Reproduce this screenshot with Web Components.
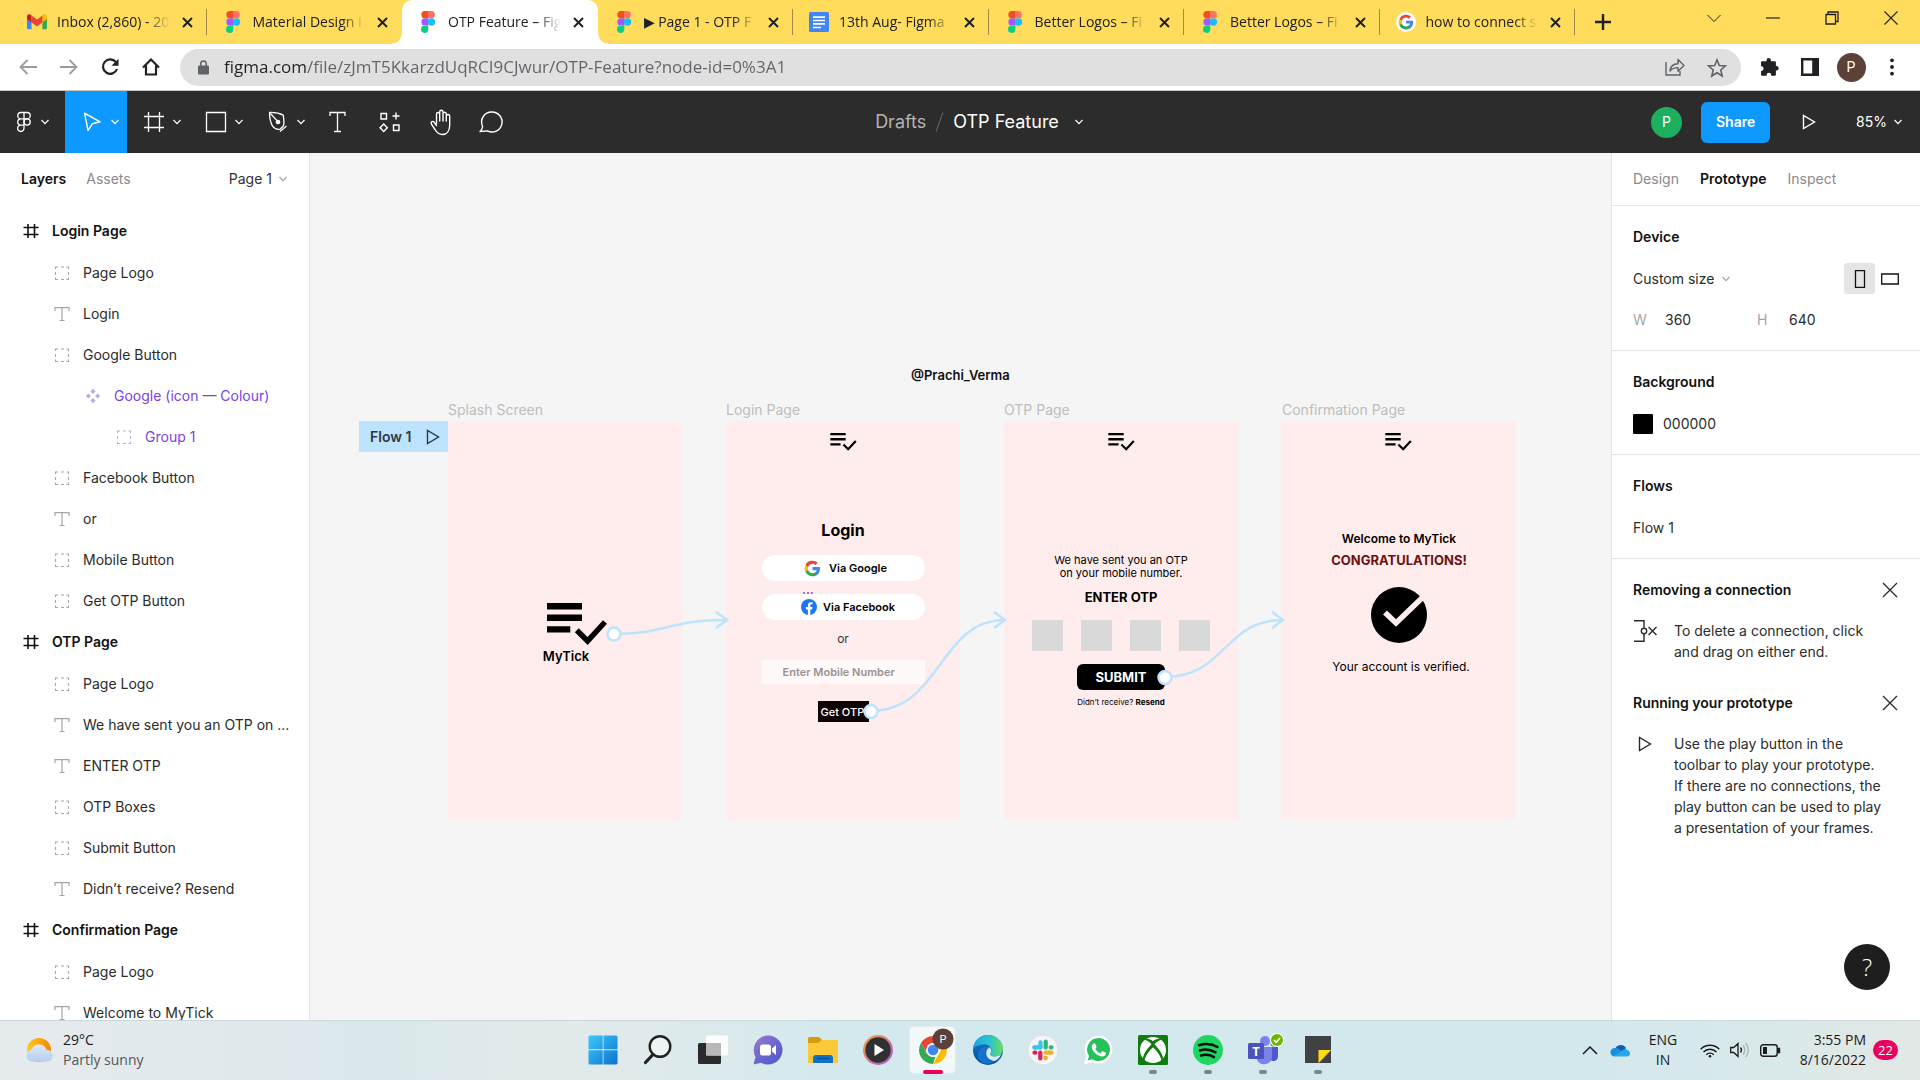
<!DOCTYPE html>
<html lang="en">
<head>
<meta charset="utf-8">
<title>OTP Feature – Figma</title>
<style>
html,body{margin:0;height:100%}
body{font-family:Inter,"Liberation Sans",sans-serif;font-size:14px;line-height:20px;color:#2b2b2b;overflow:hidden}
</style>
</head>
<body>
<desktop-app></desktop-app>
<script>
const FIGMA_LOGO = `<svg viewBox="0 0 20 24" width="20" height="24"><path d="M7 1h3.500v7.300H7A3.650 3.650 0 0 1 7 1z" fill="#f24e1e"/><path d="M10 1h3.200a3.650 3.650 0 0 1 0 7.300H10z" fill="#ff7262"/><path d="M7 8.300h3.500v7.300H7a3.650 3.650 0 0 1 0-7.300z" fill="#a259ff"/><circle cx="13.500" cy="12" r="3.650" fill="#1abcfe"/><path d="M7 15.700h3.300v3.600A3.650 3.650 0 1 1 7 15.700z" fill="#0acf83"/></svg>`;
const G_PATHS = `<path fill="#4285f4" d="M22.500 12.200c0-.8-.1-1.500-.2-2.200H12v4.300h5.900c-.3 1.400-1 2.500-2.200 3.300v2.800h3.600c2.100-1.900 3.200-4.700 3.200-8.200z"/><path fill="#34a853" d="M12 23c3 0 5.500-1 7.300-2.600l-3.600-2.800c-1 .7-2.200 1.100-3.700 1.100-2.900 0-5.300-1.900-6.200-4.500H2.200V17c1.800 3.600 5.500 6 9.800 6z"/><path fill="#fbbc05" d="M5.800 14.100a6.600 6.600 0 0 1 0-4.200V7H2.200a11 11 0 0 0 0 9.900z"/><path fill="#ea4335" d="M12 5.400c1.600 0 3.100.6 4.200 1.600l3.200-3.100A11 11 0 0 0 2.200 7l3.700 2.900C6.700 7.300 9.100 5.400 12 5.400z"/>`;
const line = (w, h, body, sw = 1) => `<svg viewBox="0 0 ${w} ${h}" width="${w}" height="${h}" fill="none" stroke="currentColor" stroke-width="${sw}">${body}</svg>`;
const app = (body, w = 32) => `<svg viewBox="0 0 ${w} 32" width="${w}" height="32">${body}</svg>`;

const ICONS = {
  figma: FIGMA_LOGO,
  gmail: `<svg viewBox="0 0 20 16" width="20" height="16"><path fill="#4285f4" d="M0 2v12a1.300 1.300 0 0 0 1.300 1.300H4.600V7z"/><path fill="#34a853" d="M20 2v12a1.300 1.300 0 0 1-1.300 1.300H15.400V7z"/><path fill="#c5221f" d="M0 2.200C0 .3 2.100-.4 3.500.6l1.100.9V8.500L0 5z"/><path fill="#fbbc04" d="M20 2.200C20 .3 17.900-.4 16.500.6l-1.100.9V8.500L20 5z"/><path fill="#ea4335" d="M4.600 1.500 10 5.600l5.400-4.100v7L10 12.500l-5.400-4z"/></svg>`,
  docs: `<svg viewBox="0 0 20 20" width="20" height="20"><rect width="20" height="20" rx="1.500" fill="#4285f4"/><path d="M4 5.200h12M4 8.500h12M4 11.800h12M4 15.500h8" stroke="#fff" stroke-width="1.700"/></svg>`,
  google: `<svg viewBox="0 0 20 20" width="20" height="20"><circle cx="10" cy="10" r="10" fill="#fff"/><g transform="translate(2 2) scale(.67)">${G_PATHS}</g></svg>`,
  g: `<svg viewBox="0 0 24 24" width="17" height="17">${G_PATHS}</svg>`,
  facebook: `<svg viewBox="0 0 16 16" width="16" height="16"><circle cx="8" cy="8" r="8" fill="#1877f2"/><path fill="#fff" d="M6.900 16V10.400H4.900V8h2V6.300c0-2 1.200-3.100 3-3.100.9 0 1.700.1 1.700.1v2h-1c-1 0-1.300.6-1.300 1.200V8h2.200l-.4 2.400H9.300V16z"/></svg>`,
  tabx: line(11, 11, `<path d="M1 1l9 9M10 1l-9 9"/>`, 2),
  plus: line(16, 16, `<path d="M8 0v16M0 8h16"/>`, 2.4),
  caret: line(14, 14, `<path d="M.5 4 7 10.500 13.500 4"/>`, 1),
  min: line(14, 14, `<path d="M0 7h14"/>`, 1.2),
  max: line(14, 14, `<path d="M1 3.500h9.500v9.500H1zM3 3.500V1h10v9.500h-2.500"/>`, 1.3),
  close: line(14, 14, `<path d="M.5.5l13 13M13.500.5l-13 13"/>`, 1.1),
  back: line(18, 16, `<path d="M18 8H1.500M8.500 1l-7 7 7 7"/>`, 1.8),
  forward: line(18, 16, `<path d="M0 8h16.500M9.500 1l7 7-7 7"/>`, 1.8),
  reload: line(18, 18, `<path d="M14.900 4.200A7.200 7.200 0 1 0 16 11"/><path d="M17.500.8v7h-7z" fill="currentColor" stroke="none"/>`, 2.2),
  home: line(18, 18, `<path d="M1 9.500 9 1.500l8 8M4 7.500v9h10v-9"/>`, 2.2),
  lock: `<svg viewBox="0 0 11 15" width="11" height="15"><path d="M2.800 6V3.700a2.700 2.700 0 0 1 5.400 0V6" fill="none" stroke="#5f6368" stroke-width="1.500"/><rect y="5.500" width="11" height="9" rx="1" fill="#5f6368"/></svg>`,
  share: line(20, 18, `<path d="M1 4v13h14v-4"/><path d="M5 13c.5-4.500 3-7 8-7.200V1.500l6 6-6 5.700V9.600c-3.500 0-6 .9-8 3.400z" stroke-linejoin="round"/>`, 1.4),
  star: line(20, 19, `<path d="M10 1.800l2.300 5.700 6.100.5-4.600 4 1.400 6-5.200-3.200L4.800 18l1.400-6-4.600-4 6.100-.5z"/>`, 1.6),
  puzzle: `<svg viewBox="0 0 20 20" width="20" height="20"><path fill="#202124" d="M7.500 3.300a2.200 2.200 0 0 1 4.400 0v.9h3.800a1.200 1.200 0 0 1 1.200 1.200v3.700h.5a2.200 2.200 0 0 1 0 4.500h-.5v3.900a1.200 1.200 0 0 1-1.200 1.200h-3.500v-.6a2.300 2.300 0 0 0-4.600 0v.6H3.200A1.200 1.200 0 0 1 2 17.500v-3.600h.7a2.400 2.400 0 0 0 0-4.700H2V5.400a1.200 1.200 0 0 1 1.200-1.200h4.300z"/></svg>`,
  side: `<svg viewBox="0 0 18 18" width="18" height="18"><path fill="#202124" fill-rule="evenodd" d="M0 0h18v18H0zM2.400 2.400v13.200h8.800V2.400z"/></svg>`,
  dots: `<svg viewBox="0 0 4 18" width="4" height="18" fill="#202124"><circle cx="2" cy="2.300" r="1.900"/><circle cx="2" cy="9" r="1.900"/><circle cx="2" cy="15.700" r="1.900"/></svg>`,
  chev: line(8, 6, `<path d="M.5 1 4 4.600 7.500 1"/>`, 1.2),
  fmenu: line(24, 24, `<path d="M12 2.500H8.900a3.100 3.100 0 0 0 0 6.300H12zM12 2.500h3.100a3.100 3.100 0 0 1 0 6.300H12zM12 8.800H8.900a3.100 3.100 0 0 0 0 6.300H12zM12 15.100H8.900A3.200 3.200 0 1 0 12 18.300z"/><circle cx="15.100" cy="12" r="3.100"/>`, 1.3),
  move: line(24, 24, `<path d="M4.500 3.200 20 11.800l-7.600 1.900-4.300 6.800z" stroke-linejoin="round"/>`, 1.4),
  frame: line(24, 24, `<path d="M6.500 2v20M17.500 2v20M2 6.500h20M2 17.500h20"/>`, 1.3),
  rect: line(24, 24, `<path d="M2.500 2.500h19v19h-19z"/>`, 1.3),
  pen: line(24, 24, `<path d="M3.500 2.500c5-.2 10.300.8 13.700 2.600.8 4.400 1.100 7.700.3 10.600l-3.500 3.500c-3 .7-5.500-.5-7.400-3C4.500 12.500 3.500 7.500 3.500 2.500zM3.500 2.500l8.200 8.900M14 21.500l6.500-5.500" stroke-linejoin="round"/><circle cx="12" cy="12" r="1.700" fill="currentColor"/>`, 1.3),
  text: line(24, 24, `<path d="M3 6V2.500h15V6M10.500 2.500v19M7 21.500h7"/>`, 1.3),
  comps: line(24, 24, `<path d="M3 3.500h5.500V9H3zM18 2.500v7M14.500 6h7M15.500 15H21v5.500h-5.500zM5.700 14l3.600 3.700-3.600 3.700-3.600-3.700z"/>`, 1.4),
  hand: line(26, 28, `<path d="M7.500 15.500V6.200c0-2.200 3.200-2.200 3.200 0V13M10.700 7V4c0-2.300 3.300-2.300 3.300 0v9M14 6c0-2.400 3.300-2.400 3.300 0v7M17.300 8.200c0-2.300 3.400-2.300 3.400 0V17c0 6-3 9.500-7.300 9.500-3.900 0-5.700-2-7.400-5L2.300 15.800c-.9-2 1.400-3.300 2.800-1.600l2.400 3.300" stroke-linecap="round" stroke-linejoin="round" transform="translate(1 0)"/>`, 1.4),
  comment: line(26, 24, `<path d="M13 2a10 10 0 1 1-4.500 18.900L1 21.500c2-1.800 2.600-3.400 2.600-5.200A10 10 0 0 1 13 2z" stroke-linejoin="round"/>`, 1.4),
  play: line(14, 16, `<path d="M1.500 1.500v13L12.500 8z"/>`, 1.4),
  lframe: line(16, 16, `<path d="M5 1v14M11.500 1v14M.5 4.500h15M.5 11.500h15"/>`, 1.6),
  lgroup: line(16, 16, `<path d="M1.500 4V2H4M7 2h3M12.500 2h2v2M14.500 7v3M14.500 12.500v2h-2M10 14.500H7M4 14.500H1.500v-2M1.500 10V7"/>`, 1.1),
  ltext: line(16, 16, `<path d="M1 5V1.700h14V5M8 1.700v12.800M5.500 14.500h5"/>`, 1.2),
  lcomp: `<svg viewBox="0 0 16 16" width="16" height="16" fill="#c0a8e0"><path d="M8 .8 10.600 3.400 8 6 5.400 3.400zM8 10l2.600 2.600L8 15.200l-2.600-2.600zM3.400 5.400 6 8l-2.600 2.600L.8 8zM12.600 5.400 15.200 8l-2.600 2.600L10 8z"/></svg>`,
  portrait: line(18, 18, `<path d="M4.500.7h9v16.600h-9z"/>`, 1.3),
  landscape: line(18, 18, `<path d="M.7 4h16.600v10H.7z"/>`, 1.3),
  x: line(14, 14, `<path d="M0 0l14 14M14 0 0 14"/>`, 1.3),
  unlink: line(24, 22, `<path d="M1 .8h10v7M11 14v7.200H1M15.500 7l8 8M23.500 7l-8 8"/><circle cx="11" cy="11" r="2.700"/>`, 1.4),
  logo: `<svg viewBox="0 0 60 41" width="60" height="41"><path d="M0 0h35v6.400H0zM0 11.600h35V18H0zM0 23.200h23.300v6.400H0z"/><path d="M29.800 27.300 40.600 38 58 19" fill="none" stroke="#000" stroke-width="5.500"/></svg>`,
  logosmall: `<svg viewBox="0 0 60 41" width="27" height="18"><path d="M0 0h35v5.400H0zM0 11.600h35V17H0zM0 23.200h23.300v5.400H0z"/><path d="M29.800 26.300 40.600 37 58 18" fill="none" stroke="#000" stroke-width="5"/></svg>`,
  verified: `<svg viewBox="0 0 56 56" width="56" height="56"><circle cx="28" cy="28" r="28"/><path d="M14 25.500 25 36 51 11" fill="none" stroke="#ffeded" stroke-width="5.500"/></svg>`,
  weather: `<svg viewBox="0 0 28 24" width="28" height="24"><defs><linearGradient id="s" x1="0" x2="1"><stop stop-color="#ffc91f"/><stop offset="1" stop-color="#f28a00"/></linearGradient><linearGradient id="c" x2="0" y2="1"><stop stop-color="#dbe9fb"/><stop offset="1" stop-color="#b9cdf0"/></linearGradient></defs><circle cx="13" cy="12" r="12" fill="url(#s)"/><path fill="url(#c)" d="M6 23.500a6 6 0 0 1-.6-11.900C6.500 8 9.700 6.500 13 6.500c3.800 0 6.800 2.200 7.600 5.500a5.800 5.800 0 0 1 1.400 11.500z"/></svg>`,
  windows: app(`<defs><linearGradient id="w" x2="1" y2="1"><stop stop-color="#3fc8fb"/><stop offset="1" stop-color="#0873cf"/></linearGradient></defs><path fill="url(#w)" d="M3 1.500h12.700v13.700H1.500V3A1.500 1.500 0 0 1 3 1.500zM16.500 1.500H29A1.500 1.500 0 0 1 30.500 3v12.200h-14zM1.500 16.200h14.200v14.300H3A1.500 1.500 0 0 1 1.500 29zM16.500 16.200h14V29a1.500 1.500 0 0 1-1.500 1.500H16.500z"/>`),
  search: app(`<circle cx="18" cy="12.500" r="10.300" fill="#eef3f4" stroke="#222" stroke-width="2.400"/><path d="M11 20.500 3.500 28.500" stroke="#222" stroke-width="3.200" stroke-linecap="round"/>`),
  taskview: app(`<rect x="1" y="9" width="23" height="21" rx="1.500" fill="#2b2b2b"/><rect x="9" y="1.500" width="22" height="20" rx="1.500" fill="#fff" opacity=".9"/><path d="M9 9h15v12.500H9z" fill="#b8b8b8"/>`),
  chat: app(`<defs><linearGradient id="h" x2="1" y2="1"><stop stop-color="#a07cc8"/><stop offset=".5" stop-color="#6a66cf"/><stop offset="1" stop-color="#5059c9"/></linearGradient></defs><path fill="url(#h)" d="M16 1.500A14.500 14.500 0 1 1 9 28.700l-6 1.500a1 1 0 0 1-1.200-1.200L3.500 23A14.500 14.500 0 0 1 16 1.500z"/><rect x="8" y="10.500" width="11" height="11" rx="2.500" fill="#fff"/><path fill="#fff" d="m20 14.500 4-3.500v10l-4-3.500z"/>`),
  folder: app(`<path fill="#d99a0b" d="M1 5a2 2 0 0 1 2-2h9l3 3-2 5H1z"/><path fill="#fcc93c" d="M1 9h10l4-3h14.500A1.500 1.500 0 0 1 31 7.500V29H1z"/><path fill="#0f73ca" d="M6 29v-5a3 3 0 0 1 3-3h14a3 3 0 0 1 3 3v5z"/><path d="M10 24.500h12" stroke="#0a4f96" stroke-width="1.500"/>`),
  media: app(`<defs><linearGradient id="m" x2="1" y2="1"><stop stop-color="#ff9c3a"/><stop offset="1" stop-color="#a359c8"/></linearGradient></defs><circle cx="16" cy="16" r="15" fill="url(#m)"/><circle cx="16" cy="16" r="12.700" fill="#2f3034"/><path d="M12.500 10v12l9.500-6z" fill="#fff"/>`),
  chrome: app(`<g transform="translate(2 0)"><circle cx="14" cy="16" r="14" fill="#fff"/><path fill="#ea4335" d="M1.900 9A14 14 0 0 1 26.100 9H14a7 7 0 0 0-6 3.500L7.300 18z"/><path fill="#fbbc04" d="M26.100 9A14 14 0 0 1 14 30l6-10.500A7 7 0 0 0 19 9z"/><path fill="#34a853" d="M14 30A14 14 0 0 1 1.900 9L8 19.500a7 7 0 0 0 8.500 3z"/><circle cx="14" cy="16" r="6.800" fill="#fff"/><circle cx="14" cy="16" r="5.300" fill="#4285f4"/></g><circle cx="26" cy="5" r="10.500" fill="#5d4037"/><text x="26" y="9" font-size="11" font-family="Roboto,sans-serif" text-anchor="middle" fill="#fff">P</text>`),
  edge: app(`<defs><linearGradient id="e1" x2="1"><stop stop-color="#1fa3e6"/><stop offset=".6" stop-color="#2fc6c8"/><stop offset="1" stop-color="#6fdc52"/></linearGradient><linearGradient id="e2" x2="0" y2="1"><stop stop-color="#1478c8"/><stop offset="1" stop-color="#0c4f9e"/></linearGradient></defs><circle cx="16" cy="16" r="15" fill="url(#e2)"/><path fill="url(#e1)" d="M1 15C1.500 6.500 8.500 1 16 1c9 0 15 6.500 15 13.500 0 5-3.500 8-8 8-3.500 0-5.500-1.500-4.800-3 .9-1.200 1.300-2.200 1.300-3.500 0-3-3-5.500-7-5.500C7.500 10.500 3 12 1 15z"/><path fill="#d5eaef" d="M18.200 19.500c-.7 1.500 1.300 3 4.800 3 2.500 0 4.800-.9 6.300-2.500-1.500 4-4.300 6.300-6.800 7-5.500-.5-8.500-4-8.300-8 .1-2.500 1.300-4.500 3-5.700 1.600 1 2.200 2.400 2.100 3.700-.1 1-.5 1.700-1.100 2.500z"/><path fill="#1574cf" d="M14 16c-2.500 5 1.500 12.500 8.500 11-5 4.500-14.500 3.500-16.500-4-1-5 2.500-9.500 7.500-10 .8 0 3 .5 4 1.200-1.500 0-2.700.6-3.500 1.800z"/>`),
  slack: app(`<circle cx="16" cy="16" r="15" fill="#f6f6f8" stroke="#dcdfe2"/><g stroke-width="4.200" stroke-linecap="round"><path d="M13.500 8.300v5.200M7.500 13.500h1.200" stroke="#36c5f0"/><path d="M7.500 13.300h6" stroke="#36c5f0"/><path d="M18.700 7.500v6M24.500 13.300h-.8" stroke="#2eb67d"/><path d="M18.500 18.700h6M18.700 24.300v-.8" stroke="#ecb22e"/><path d="M13.300 18.500v6M7.500 18.700h.8" stroke="#e01e5a"/></g>`),
  whatsapp: app(`<path fill="#fff" d="M16.500 1.500a14 14 0 1 1-6.600 26.400L1.800 30.500 4.400 22.500A14 14 0 0 1 16.500 1.500z"/><path fill="#25c15b" d="M16.500 4a11.500 11.500 0 1 1-6.200 21.200l-4.700 1.400 1.500-4.600A11.500 11.500 0 0 1 16.500 4z"/><path fill="#fff" d="M11.700 9.500c.6-.3 1.300-.2 1.600.4l1.200 2.700c.2.500 0 1-1.200 2.200 1.200 2.300 2.800 3.700 5 4.600l1.500-1.800c.4-.4.8-.4 1.300-.2l2.400 1.200c.6.300.6.900.3 1.700-.7 1.700-2.600 2.500-4.200 2.200-4.700-1-8.400-4.200-9.800-8.500-.5-1.800.5-3.800 1.900-4.500z"/>`),
  xbox: app(`<rect x="1" y="1" width="30" height="30" rx="1.500" fill="#107c10"/><circle cx="16" cy="16" r="13" fill="#fff"/><path fill="#107c10" d="M7.500 5.800C9.500 4 13 5 16 7.200 19 5 22.500 4 24.500 5.800 22.500 6 19.500 8 17.500 10.300 22.500 15.500 26.500 21.500 26 25.500L24.600 27C24 22.500 20 17 16 13.300 12 17 8 22.500 7.400 27L6 25.500C5.500 21.500 9.500 15.500 14.500 10.300 12.500 8 9.500 6 7.500 5.800z"/>`),
  spotify: app(`<circle cx="16" cy="16" r="15" fill="#1ed760"/><path d="M7 11.200c6-1.800 13.500-1.200 18.500 1.800M8 16.500c5-1.500 11-.8 15.500 1.800M9 21.500c4.300-1.200 9-.7 13 1.600" fill="none" stroke="#0b0b0b" stroke-width="2.500" stroke-linecap="round"/>`),
  teams: app(`<circle cx="27" cy="9" r="3.500" fill="#5059c9"/><circle cx="18" cy="7" r="5" fill="#7b83eb"/><path fill="#5059c9" d="M22 13h9v9c0 3-2 5-4.500 5S22 25 22 22z"/><path fill="#7b83eb" d="M10 13h15v10a8 8 0 0 1-15 3z"/><rect x="1" y="9" width="16" height="16" rx="1.500" fill="#4b53bc"/><text x="9" y="22" font-family="Open Sans,sans-serif" font-weight="700" font-size="13" fill="#fff" text-anchor="middle">T</text><circle cx="30" cy="6" r="7" fill="#fff"/><circle cx="30" cy="6" r="6" fill="#6bb700"/><path d="m27 6 2.200 2.300L33 4" fill="none" stroke="#fff" stroke-width="1.600"/>`),
  sticky: app(`<path d="M3 2h26v14L17 29H3z" fill="#3f4143"/><path d="M29 16v13H17z" fill="#3f4143"/><path d="M16.500 16H29L16.500 29z" fill="#ffdc14"/>`),
  trayup: line(16, 10, `<path d="M1 9l7-7 7 7"/>`, 1.5),
  cloud: `<svg viewBox="0 0 20 14" width="20" height="14"><path fill="#0a5cb4" d="M5.500 5A6 6 0 0 1 16 5l-4 5z"/><path fill="#1490df" d="M4 13.500A4.200 4.200 0 0 1 5.500 5c3 0 5 2 7 3.500z"/><path fill="#28a8ea" d="M4 13.500 14.500 6c2 .0 5.500 1.500 5.500 4.500 0 2-1.500 3-3 3z"/></svg>`,
  wifi: line(20, 15, `<path d="M.7 6.200a13 13 0 0 1 18.600 0M3.500 9a9 9 0 0 1 13 0M6.300 11.700a5.200 5.200 0 0 1 7.400 0"/><circle cx="10" cy="13.200" r="1.300" fill="currentColor" stroke="none"/>`, 1.4),
  sound: line(20, 16, `<path d="M.7 5.500h3L8 1.500v13l-4.300-4h-3zM10.500 5.500a4 4 0 0 1 0 5"/><path d="M13 3.300a7 7 0 0 1 0 9.400M15.500 1a10 10 0 0 1 0 14" stroke="#a9b3b5"/>`, 1.3),
  battery: line(20, 13, `<rect x=".7" y=".7" width="16.500" height="11.600" rx="2.500"/><path d="M18 4.500h1.500v4H18z" fill="currentColor"/><path d="M3 3h4v7H3z" fill="currentColor" stroke="none"/>`, 1.4)
};

/* Registers an element whose shadow root is cloned from a template. */
function define(name, css, html, setup) {
  const t = document.createElement('template');
  t.innerHTML = `<style>*{box-sizing:border-box}button,input,select{font:inherit;color:inherit;background:none;border:0;margin:0;padding:0;border-radius:0}a{color:inherit;text-decoration:none}${css}</style>${html}`;
  customElements.define(name, class extends HTMLElement {
    constructor() { super(); this.attachShadow({ mode: 'open' }).append(t.content.cloneNode(true)); }
    connectedCallback() { if (setup) setup(this, this.shadowRoot); }
  });
}

customElements.define('ui-icon', class extends HTMLElement {
  static observedAttributes = ['name'];
  constructor() { super(); this.attachShadow({ mode: 'open' }); }
  connectedCallback() { this.setAttribute('aria-hidden', 'true'); }
  attributeChangedCallback() {
    this.shadowRoot.innerHTML = `<style>:host{display:inline-flex;align-items:center;justify-content:center;flex:none}svg{display:block;overflow:visible}</style>${ICONS[this.getAttribute('name')]}`;
  }
});

define('browser-tab', `
:host{display:flex;flex:1 1 0;min-width:0;height:44px;align-items:center;gap:10px;padding:0 14px 0 16px;position:relative}
:host::after{content:"";position:absolute;right:0;top:9px;width:1px;height:26px;background:#a08d45}
:host([plain])::after,:host([active])::after{display:none}
:host([active]){background:#fff;border-radius:10px 10px 0 0}
.foot{display:none;position:absolute;bottom:0;width:10px;height:10px}
:host([active]) .foot{display:block}
.l{left:-10px;background:radial-gradient(circle at 0 0,transparent 9px,#fff 10px)}
.r{right:-10px;background:radial-gradient(circle at 100% 0,transparent 9px,#fff 10px)}
.icon{width:20px}
.label{flex:1;min-width:0;overflow:hidden;white-space:nowrap;mask-image:linear-gradient(90deg,#000 78%,transparent 98%)}
button{display:flex}`,
`<span class="foot l"></span><span class="foot r"></span><ui-icon class="icon"></ui-icon><span class="label"><slot></slot></span><button aria-label="Close tab"><ui-icon name="tabx"></ui-icon></button>`,
(h, r) => r.querySelector('.icon').setAttribute('name', h.getAttribute('icon')));

define('browser-chrome', `
:host{display:block;flex:none;font-family:"Open Sans","Noto Sans",sans-serif;color:#202124}
.strip{display:flex;background:#ffdc5c;height:44px;padding-left:11px;font-size:14px}
.tabs{display:flex;width:1564px;min-width:0}
.new{width:54px;margin-left:1px;display:flex;align-items:center;justify-content:center}
.win{display:flex;margin-left:auto;height:36px}
.win button{width:59px;display:flex;align-items:center;justify-content:center}
.bar{display:flex;align-items:center;gap:5px;height:47px;padding:0 10px;background:#fff;border-bottom:1px solid #c6c6c6}
.bar>button{width:36px;height:36px;display:flex;align-items:center;justify-content:center;flex:none}
.off{color:#9a9c9e}
.addr{flex:1;min-width:0;height:37px;border-radius:19px;background:#e0e0e0;display:flex;align-items:center;margin:0 5px 0 6px;padding:0 14px 0 18px;gap:15px;color:#5f6368}
.addr input{flex:1;min-width:0;outline:0;font-size:17px;line-height:24px;color:transparent;background:linear-gradient(90deg,#202124 83px,#5f6368 83px);-webkit-background-clip:text;background-clip:text}
.addr button{display:flex}.addr button+button{margin-left:7px}
.me{width:29px;height:29px;border-radius:50%;background:#5d4037;color:#fff;display:grid;place-items:center;font-family:Roboto,sans-serif;font-size:14px}`,
`<div class="strip"><div class="tabs">
<browser-tab icon="gmail">Inbox (2,860) - 20</browser-tab>
<browser-tab icon="figma" plain>Material Design I</browser-tab>
<browser-tab icon="figma" active>OTP Feature – Fig</browser-tab>
<browser-tab icon="figma">▶ Page 1 - OTP F</browser-tab>
<browser-tab icon="docs">13th Aug- Figma</browser-tab>
<browser-tab icon="figma">Better Logos – Fi</browser-tab>
<browser-tab icon="figma">Better Logos – Fi</browser-tab>
<browser-tab icon="google">how to connect s</browser-tab></div>
<button class="new" aria-label="New tab"><ui-icon name="plus"></ui-icon></button>
<div class="win"><button aria-label="Search tabs"><ui-icon name="caret"></ui-icon></button><button aria-label="Minimize"><ui-icon name="min"></ui-icon></button><button aria-label="Restore"><ui-icon name="max"></ui-icon></button><button aria-label="Close"><ui-icon name="close"></ui-icon></button></div></div>
<div class="bar"><button class="off" aria-label="Back"><ui-icon name="back"></ui-icon></button><button class="off" aria-label="Forward"><ui-icon name="forward"></ui-icon></button><button aria-label="Reload"><ui-icon name="reload"></ui-icon></button><button aria-label="Home"><ui-icon name="home"></ui-icon></button>
<div class="addr"><ui-icon name="lock"></ui-icon><input aria-label="Address" value="figma.com/file/zJmT5KkarzdUqRCI9CJwur/OTP-Feature?node-id=0%3A1"><button aria-label="Share page"><ui-icon name="share"></ui-icon></button><button aria-label="Bookmark"><ui-icon name="star"></ui-icon></button></div>
<button aria-label="Extensions"><ui-icon name="puzzle"></ui-icon></button><button aria-label="Side panel"><ui-icon name="side"></ui-icon></button><button aria-label="Profile"><span class="me">P</span></button><button aria-label="Menu"><ui-icon name="dots"></ui-icon></button></div>`);

define('figma-toolbar', `
:host{display:flex;flex:none;height:62px;background:#2c2c2c;color:#fff;align-items:stretch}
.side{display:flex;flex:1 1 0;align-items:stretch}
.side>button{display:flex;align-items:center}
.menu{width:65px;padding-left:12px;gap:5px}.menu ui-icon:first-child{width:24px}
.tool{width:62px;padding-left:15px;gap:7px}.on{background:#0d99ff}
.one{width:51px;justify-content:center}
.title{display:flex;align-items:center;gap:10px;padding-left:38px;font-size:18px;line-height:24px;white-space:nowrap}
.title a{color:#b3b3b3}.title i{width:1px;height:20px;background:#6b6b6b;transform:rotate(20deg);margin:0 3px}
.title button{display:flex;align-items:center;gap:16px}
.right{justify-content:flex-end;align-items:center}
.me{width:31px;height:31px;border-radius:50%;background:#1baf5e;display:grid;place-items:center;font-size:14px}
.side>.share{height:41px;width:69px;border-radius:6px;background:#0d99ff;justify-content:center;margin:0 32px 0 19px;font-weight:600}
.zoom{margin:0 18px 0 40px;gap:7px}`,
`<div class="side"><button class="menu" aria-label="Main menu"><ui-icon name="fmenu"></ui-icon><ui-icon name="chev"></ui-icon></button>
<button class="tool on" aria-label="Move"><ui-icon name="move"></ui-icon><ui-icon name="chev"></ui-icon></button>
<button class="tool" aria-label="Frame"><ui-icon name="frame"></ui-icon><ui-icon name="chev"></ui-icon></button>
<button class="tool" aria-label="Rectangle"><ui-icon name="rect"></ui-icon><ui-icon name="chev"></ui-icon></button>
<button class="tool" aria-label="Pen"><ui-icon name="pen"></ui-icon><ui-icon name="chev"></ui-icon></button>
<button class="one" aria-label="Text"><ui-icon name="text"></ui-icon></button><button class="one" aria-label="Resources"><ui-icon name="comps"></ui-icon></button><button class="one" aria-label="Hand"><ui-icon name="hand"></ui-icon></button><button class="one" aria-label="Comment"><ui-icon name="comment"></ui-icon></button></div>
<div class="title"><a href="#drafts">Drafts</a><i></i><button>OTP Feature<ui-icon name="chev"></ui-icon></button></div>
<div class="side right"><span class="me">P</span><button class="share">Share</button><button aria-label="Present"><ui-icon name="play"></ui-icon></button><button class="zoom">85%<ui-icon name="chev"></ui-icon></button></div>`);

define('layer-row', `
:host{display:flex;align-items:center;gap:13px;height:41px;flex:none;padding:0 16px 0 54px;color:#2b2b2b}
:host([level="0"]){height:42px;padding-left:23px;font-weight:600;color:#111}
:host([level="2"]){padding-left:85px;color:#7b3fe4}
:host([level="3"]){padding-left:116px;color:#7b3fe4}
ui-icon{color:#a6a6a6}:host([level="0"]) ui-icon{color:#111}:host([level="3"]) ui-icon{color:#c0a8e0}
span{white-space:nowrap}`,
`<ui-icon></ui-icon><span><slot></slot></span>`,
(h, r) => r.querySelector('ui-icon').setAttribute('name', h.getAttribute('icon')));

define('layers-panel', `
:host{display:flex;flex-direction:column;width:310px;flex:none;background:#fff;border-right:1px solid #e5e5e5;overflow:hidden}
header{display:flex;flex:none;height:52px;align-items:center;gap:20px;padding:0 22px 0 21px;color:#8a8a8a}
header .on{font-weight:600;color:#111}.page{margin-left:auto;display:flex;align-items:center;gap:7px;color:#333}.page ui-icon{color:#a6a6a6}
nav{padding-top:5px;display:flex;flex-direction:column;min-height:0}`,
`<header><button class="on">Layers</button><button>Assets</button><button class="page">Page 1<ui-icon name="chev"></ui-icon></button></header>
<nav aria-label="Layers">
<layer-row level="0" icon="lframe">Login Page</layer-row>
<layer-row icon="lgroup">Page Logo</layer-row>
<layer-row icon="ltext">Login</layer-row>
<layer-row icon="lgroup">Google Button</layer-row>
<layer-row level="2" icon="lcomp">Google (icon — Colour)</layer-row>
<layer-row level="3" icon="lgroup">Group 1</layer-row>
<layer-row icon="lgroup">Facebook Button</layer-row>
<layer-row icon="ltext">or</layer-row>
<layer-row icon="lgroup">Mobile Button</layer-row>
<layer-row icon="lgroup">Get OTP Button</layer-row>
<layer-row level="0" icon="lframe">OTP Page</layer-row>
<layer-row icon="lgroup">Page Logo</layer-row>
<layer-row icon="ltext">We have sent you an OTP on ...</layer-row>
<layer-row icon="ltext">ENTER OTP</layer-row>
<layer-row icon="lgroup">OTP Boxes</layer-row>
<layer-row icon="lgroup">Submit Button</layer-row>
<layer-row icon="ltext">Didn’t receive? Resend</layer-row>
<layer-row level="0" icon="lframe">Confirmation Page</layer-row>
<layer-row icon="lgroup">Page Logo</layer-row>
<layer-row icon="ltext">Welcome to MyTick</layer-row></nav>`);

define('design-frame', `
:host{display:flex;flex-direction:column;width:234px;flex:none}
.name{color:#bdbdbd;height:21px;line-height:20px;white-space:nowrap}
.board{height:398px;background:#ffeded;display:flex;flex-direction:column;align-items:center;padding-top:12px;color:#000}`,
`<div class="name"></div><div class="board"><slot></slot></div>`,
(h, r) => { r.querySelector('.name').textContent = h.getAttribute('name'); });

define('splash-screen', `
:host{display:flex;flex-direction:column;align-items:center;gap:4px;padding:170px 0 0 2px;font-size:13px;font-weight:600;line-height:16px}
ui-icon{padding-left:22px}`, `<ui-icon name="logo"></ui-icon><span>MyTick</span>`);

define('login-screen', `
:host{display:flex;flex-direction:column;align-items:center;width:163px;font-size:11px;line-height:16px}
h2{margin:69px 0 0;font-size:16px;line-height:20px;font-weight:700}
.pill{width:100%;height:26px;border-radius:13px;background:#fff;display:flex;align-items:center;justify-content:center;gap:8px;font-weight:600;margin-top:15px;padding-left:5px}
.fb{margin-top:13px;gap:6px;padding-left:10px;position:relative}
.fb::before{content:"";position:absolute;left:41px;top:-2px;width:10px;height:2px;background:repeating-linear-gradient(90deg,#b06be0 0 2px,transparent 2px 4px)}
.or{font-size:12px;margin-top:11px;color:#333}
input{width:100%;height:24px;margin-top:13px;background:#fff9f9;padding-left:21px;font-weight:600}
input::placeholder{color:#9b9191;opacity:1}
.get{height:21px;width:51px;margin-top:17px;background:#0d0203;color:#fff;font-weight:500;padding-left:3px;text-align:left;white-space:nowrap}`,
`<ui-icon name="logosmall"></ui-icon><h2>Login</h2><button class="pill"><ui-icon name="g"></ui-icon>Via Google</button><button class="pill fb"><ui-icon name="facebook"></ui-icon>Via Facebook</button><span class="or">or</span><input aria-label="Mobile number" placeholder="Enter Mobile Number"><button class="get">Get OTP</button>`);

define('otp-screen', `
:host{display:flex;flex-direction:column;align-items:center;font-size:11px;line-height:13px;text-align:center}
p{margin:103px 0 0}h2{margin:9px 0 0;font-size:13px;line-height:16px;font-weight:700}
.boxes{display:flex;gap:18px;margin-top:15px}.boxes input{width:31px;height:31px;background:#d9d9d9;text-align:center}
.go{width:88px;height:26px;border-radius:6px;background:#000;color:#fff;font-weight:700;font-size:13px;margin-top:13px}
small{font-size:8px;line-height:12px;margin-top:6px}`,
`<ui-icon name="logosmall"></ui-icon><p>We have sent you an OTP<br>on your mobile number.</p><h2>ENTER OTP</h2><div class="boxes"><input aria-label="Digit 1"><input aria-label="Digit 2"><input aria-label="Digit 3"><input aria-label="Digit 4"></div><button class="go">SUBMIT</button><small>Didn’t receive? <b>Resend</b></small>`);

define('done-screen', `
:host{display:flex;flex-direction:column;align-items:center;font-size:12px;line-height:16px}
strong{font-weight:600;margin-top:80px}h2{margin:5px 0 19px;font-size:13px;line-height:16px;font-weight:700;color:#6d1014}
p{margin:16px 0 0;padding-left:4px}`,
`<ui-icon name="logosmall"></ui-icon><strong>Welcome to MyTick</strong><h2>CONGRATULATIONS!</h2><ui-icon name="verified"></ui-icon><p>Your account is verified.</p>`);

/* Free canvas: its nodes and wires sit at their own coordinates. */
define('prototype-canvas', `
:host{display:block;flex:1;min-width:0;background:#f5f5f5;position:relative;overflow:hidden}
.boards{position:absolute;left:138px;top:247px;display:flex;gap:44px}
.handle{position:absolute;left:601px;top:212px;font-size:13px;font-weight:600;color:#111}
.flow{position:absolute;left:49px;top:268px;width:89px;height:31px;background:#bde3ff;display:flex;align-items:center;justify-content:space-between;padding:0 8px 0 11px;font-weight:600;color:#2b3a46}
svg{position:absolute;left:0;top:0}`,
`<span class="handle">@Prachi_Verma</span>
<div class="boards"><design-frame name="Splash Screen"><splash-screen></splash-screen></design-frame><design-frame name="Login Page"><login-screen></login-screen></design-frame><design-frame name="OTP Page"><otp-screen></otp-screen></design-frame><design-frame name="Confirmation Page"><done-screen></done-screen></design-frame></div>
<button class="flow">Flow 1<ui-icon name="play"></ui-icon></button>
<svg width="1302" height="867" viewBox="310 153 1302 867" fill="none" stroke="#bde3ff" stroke-width="2.500"><path d="M614 634C665 634 670 620 726 620M716 612l11 8-11 8M871 711C940 711 940 620 1004 620M994 612l11 8-11 8M1165 677C1225 677 1225 620 1282 620M1272 612l11 8-11 8"/><g fill="#fff"><circle cx="614" cy="634" r="6.500"/><circle cx="871" cy="711.500" r="6.500"/><circle cx="1165" cy="677.500" r="6.500"/></g></svg>`);

define('panel-section', `
:host{display:block;border-bottom:1px solid #e5e5e5;padding:21px 21px 15px}
h3{margin:0;font-size:14px;line-height:20px;font-weight:600;color:#111}`,
`<h3></h3><slot></slot>`, (h, r) => { r.querySelector('h3').textContent = h.getAttribute('heading'); });

define('help-tip', `
:host{display:block;padding:0 21px}
header{display:flex;align-items:center;justify-content:space-between;padding-right:2px}
h3{margin:0;font-size:14px;line-height:20px;font-weight:600;color:#111}
button{display:flex}.row{display:flex;align-items:flex-start;margin-top:20px}
.i{width:24px;height:22px}p{margin:0;padding:0 15px 0 17px;line-height:21px}`,
`<header><h3></h3><button aria-label="Dismiss"><ui-icon name="x"></ui-icon></button></header><div class="row"><ui-icon class="i"></ui-icon><p><slot></slot></p></div>`,
(h, r) => { r.querySelector('h3').textContent = h.getAttribute('heading'); r.querySelector('.i').setAttribute('name', h.getAttribute('icon')); });

define('prototype-panel', `
:host{display:block;width:309px;flex:none;background:#fff;border-left:1px solid #e5e5e5;position:relative}
.tabs{display:flex;height:53px;align-items:center;gap:21px;padding:0 21px;border-bottom:1px solid #e5e5e5;color:#8a8a8a}
.tabs .on{font-weight:600;color:#111}
.row{display:flex;align-items:center;height:31px;margin-top:16px}
select{appearance:none;field-sizing:content;outline:0;margin-right:8px}.grey{color:#a6a6a6}
.o{width:31px;height:31px;border-radius:3px;display:grid;place-items:center;color:#111}.o+.o{margin-left:6px;width:18px}.on2{background:#e5e5e5;margin-left:auto}
.size{margin-top:10px}label{color:#a6a6a6;width:32px}.size input{width:92px}
.sw{width:20px;height:20px;background:#000;border-radius:1px;margin-right:10px}
.bg input{width:120px}
.tips{display:flex;flex-direction:column;gap:31px;padding-top:21px}
.help{position:absolute;right:30px;bottom:30px;width:46px;height:46px;border-radius:50%;background:#1e1e1e;color:#fff;font-family:"Open Sans",sans-serif;font-size:24px;font-weight:300}`,
`<div class="tabs"><button>Design</button><button class="on">Prototype</button><button>Inspect</button></div>
<panel-section heading="Device"><div class="row"><select aria-label="Device size"><option>Custom size</option></select><ui-icon class="grey" name="chev"></ui-icon><button class="o on2" aria-label="Portrait"><ui-icon name="portrait"></ui-icon></button><button class="o" aria-label="Landscape"><ui-icon name="landscape"></ui-icon></button></div>
<div class="row size"><label for="w">W</label><input id="w" value="360"><label for="h">H</label><input id="h" value="640"></div></panel-section>
<panel-section heading="Background"><div class="row bg"><span class="sw"></span><input aria-label="Background colour" value="000000"></div></panel-section>
<panel-section heading="Flows"><div class="row">Flow 1</div></panel-section>
<div class="tips"><help-tip heading="Removing a connection" icon="unlink">To delete a connection, click and drag on either end.</help-tip>
<help-tip heading="Running your prototype" icon="play">Use the play button in the toolbar to play your prototype. If there are no connections, the play button can be used to play a presentation of your frames.</help-tip></div>
<button class="help" aria-label="Help">?</button>`);

define('task-button', `
:host{display:block}
button{width:55px;height:60px;position:relative;display:grid;place-items:center}
:host([active]) button::before{content:"";position:absolute;left:4px;right:4px;top:6px;bottom:6px;border-radius:5px;background:#f3f8f9;border:1px solid #e2eaec}
ui-icon{position:relative;width:32px}
:host([running]) button::after{content:"";position:absolute;bottom:6px;left:24px;width:8px;height:4px;border-radius:2px;background:#7c8688}
:host([active]) button::after{content:"";position:absolute;bottom:6px;left:18px;width:20px;height:4px;border-radius:2px;background:#ea005e}`,
`<button><ui-icon></ui-icon></button>`,
(h, r) => { const n = h.getAttribute('icon'); r.querySelector('ui-icon').setAttribute('name', n); r.querySelector('button').setAttribute('aria-label', n); });

define('task-bar', `
:host{display:flex;flex:none;height:60px;align-items:center;background:linear-gradient(90deg,#e6eaed,#dbe9ec 20%,#e2eaea 30%,#d3e9ee 45%,#d2e8ed 80%,#d9e9ea 92%,#e2e8e5);box-shadow:inset 0 1px #cbd8dc;font-family:"Open Sans","Noto Sans",sans-serif;font-size:14px;line-height:20px;color:#1b1b1b}
.side{flex:1 1 0;display:flex;align-items:center;padding:0 22px}
.weather{display:flex;align-items:center;gap:9px;padding-left:4px;text-align:left}
.weather small{display:block;font-size:14px;color:#555}
.apps{display:flex;align-items:center}
.tray{justify-content:flex-end}
.tray button{display:flex;align-items:center}
.tray .more{margin-right:12px}
.lang{width:66px;justify-content:center;text-align:center}
.sys{gap:10px;margin:0 0 0 4px}
.time{width:86px;justify-content:flex-end;text-align:right;margin-right:7px}
.tray .badge{width:25px;height:20px;border-radius:10px;background:#ea005e;color:#fff;font-size:13px;justify-content:center}`,
`<div class="side"><button class="weather"><ui-icon name="weather"></ui-icon><span>29°C<small>Partly sunny</small></span></button></div>
<div class="apps">
<task-button icon="windows"></task-button><task-button icon="search"></task-button><task-button icon="taskview"></task-button><task-button icon="chat"></task-button><task-button icon="folder"></task-button><task-button icon="media"></task-button><task-button icon="chrome" active></task-button><task-button icon="edge"></task-button><task-button icon="slack"></task-button><task-button icon="whatsapp"></task-button><task-button icon="xbox" running></task-button><task-button icon="spotify" running></task-button><task-button icon="teams" running></task-button><task-button icon="sticky" running></task-button></div>
<div class="side tray"><button class="more" aria-label="Hidden icons"><ui-icon name="trayup"></ui-icon></button><button aria-label="OneDrive"><ui-icon name="cloud"></ui-icon></button><button class="lang"><span>ENG<br>IN</span></button><button class="sys" aria-label="Network, sound, battery"><ui-icon name="wifi"></ui-icon><ui-icon name="sound"></ui-icon><ui-icon name="battery"></ui-icon></button><button class="time"><span>3:55 PM<br>8/16/2022</span></button><button class="badge">22</button></div>`);

define('desktop-app', `
:host{display:flex;flex-direction:column;height:100vh}
main{flex:1;min-height:0;display:flex}`,
`<browser-chrome></browser-chrome><figma-toolbar></figma-toolbar><main><layers-panel></layers-panel><prototype-canvas></prototype-canvas><prototype-panel></prototype-panel></main><task-bar></task-bar>`);
</script>
</body>
</html>
